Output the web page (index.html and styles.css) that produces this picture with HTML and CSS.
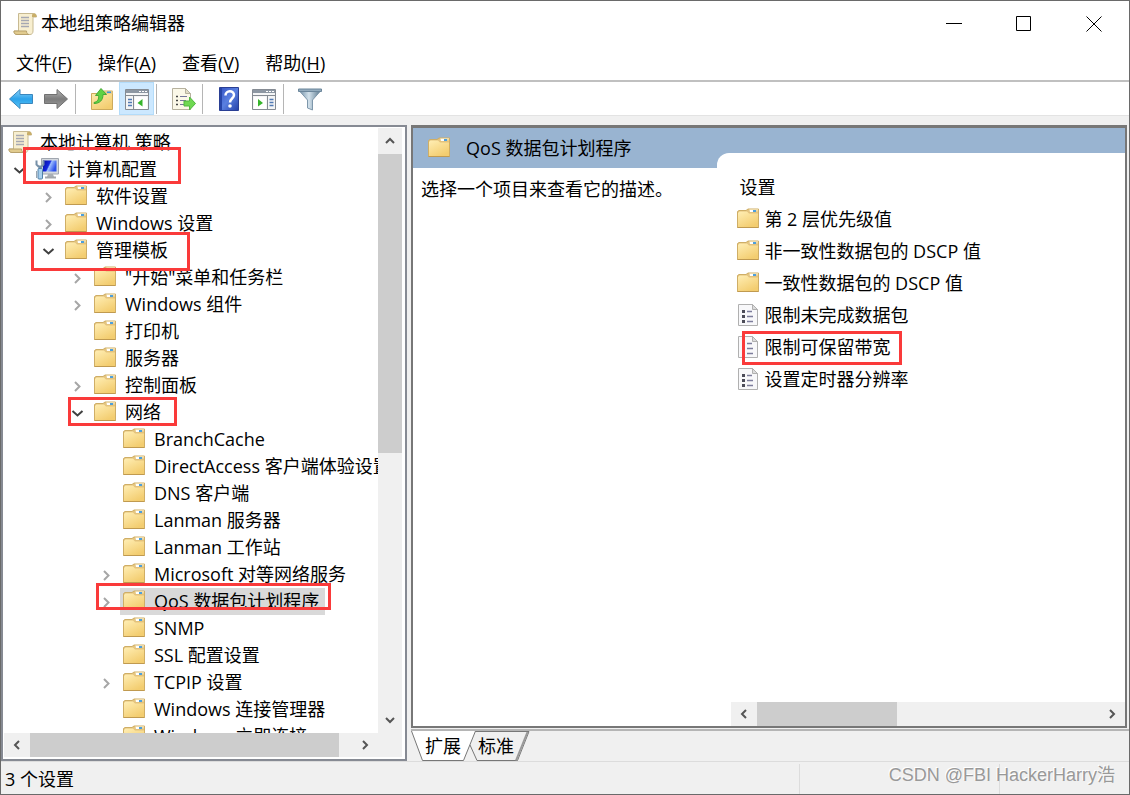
FILE: index.html
```html
<!DOCTYPE html>
<html lang="zh">
<head>
  <meta charset="UTF-8" />
  <meta name="viewport" content="width=device-width, initial-scale=1.0" />
  <title>本地组策略编辑器</title>
  <link rel="stylesheet" href="styles.css">
</head>
<body>
  <!-- 图标 -->
  <svg class="sprite" aria-hidden="true">
    <defs>
      <linearGradient id="gFolder" x1="0" y1="0" x2="0.6" y2="1">
        <stop offset="0" stop-color="#ffeeb4" /><stop offset="1" stop-color="#f3cd70" />
      </linearGradient>
      <linearGradient id="gBlue" x1="0" y1="0" x2="0" y2="1">
        <stop offset="0" stop-color="#8fd3f8" /><stop offset="0.5" stop-color="#2ba2ea" /><stop offset="1" stop-color="#5cc6f7" />
      </linearGradient>
      <linearGradient id="gGray" x1="0" y1="0" x2="0" y2="1">
        <stop offset="0" stop-color="#b8b8b8" /><stop offset="0.5" stop-color="#7c7c7c" /><stop offset="1" stop-color="#a0a0a0" />
      </linearGradient>
      <linearGradient id="gHelp" x1="0" y1="0" x2="1" y2="1">
        <stop offset="0" stop-color="#3453c4" /><stop offset="0.5" stop-color="#5a80e0" /><stop offset="1" stop-color="#2440a8" />
      </linearGradient>
      <linearGradient id="gScreen" x1="0" y1="0" x2="1" y2="0.4">
        <stop offset="0" stop-color="#0508a0" /><stop offset="0.5" stop-color="#1428e0" /><stop offset="0.6" stop-color="#9cbcff" /><stop offset="1" stop-color="#2c50ea" />
      </linearGradient>
      <linearGradient id="gFunnel" x1="0" y1="0" x2="1" y2="0">
        <stop offset="0" stop-color="#6d8ba3" /><stop offset="0.45" stop-color="#d3e2ec" /><stop offset="1" stop-color="#557389" />
      </linearGradient>
    </defs>
    <symbol id="folder" viewBox="0 0 24 24">
      <path d="M1.500 4.500L3 3.500h7l2-1.500h10.500v18.500H1.500z" fill="#e3c27c" stroke="#cfae66" />
      <path d="M2 6L3.500 4.500h7.500l2 2h9v13.500H2z" fill="url(#gFolder)" />
      <path d="M12.500 4.500l1-2.500h8.500v2.500z" fill="#edd9a8" />
      <path d="M14 3h3v2h-3z" fill="#fff" />
      <path d="M17 3h3v2h-3z" fill="#4c9fdc" />
      <path d="M1.500 20.500h21" stroke="#c09a50" />
    </symbol>
    <symbol id="scroll" viewBox="0 0 24 24">
      <path d="M5.500 1.500h15c2 0 3 1 3 3.500h-3.500v14c0 2-1 3.500-3 3.500H4c-2 0-3-1-3-3.500h4.500z" fill="#f8efd0" stroke="#c8ba92" />
      <path d="M20.500 1.500c-1.500 0-1.500 1.500-1.500 3.500h4.500c0-2.500-1-3.500-3-3.500z" fill="#c9ae68" />
      <path d="M1 19h12.500c0 2 1 3.500 2.500 3.500H4c-2 0-3-1-3-3.500z" fill="#e1cb8e" stroke="#b7a06b" />
      <path d="M8 5.500h8M8 8.500h8M8 11.500h8M8 14.500h8" stroke="#a6a8b2" stroke-width="1.500" />
    </symbol>
    <symbol id="computer" viewBox="0 0 24 24">
      <path d="M6.500 1.500h17v15.500h-17z" fill="#d3d8de" stroke="#a0a6af" />
      <path d="M8 3.500h13.500v11H8z" fill="url(#gScreen)" />
      <path d="M13 17h5l1 3h-7z" fill="#a9afb5" />
      <path d="M10 20.500h11" stroke="#a2a6ab" stroke-width="2" />
      <path d="M1.500 3.500v4l2 2h3l2-2v-4" fill="none" stroke="#7690a8" stroke-width="2" />
      <path d="M5 9v4" stroke="#7690a8" stroke-width="3" />
      <rect x="3" y="11.500" width="4.500" height="10.500" rx="1" fill="#a8d0ee" stroke="#5180a7" />
      <path d="M1.500 14v7" stroke="#9aa5b0" />
    </symbol>
    <symbol id="policy" viewBox="0 0 24 24">
      <path d="M2.500 1.500h14l5 5v16h-19z" fill="#f8f8fa" stroke="#b0b0b0" />
      <path d="M16.500 1.500v5h5z" fill="#dcdcdc" stroke="#b0b0b0" />
      <path d="M6 7h3v3H6zM6 12h3v3H6zM6 17h3v3H6z" fill="#4c4c58" />
      <path d="M11 8.500h5M11 13.500h6M11 18.500h6" stroke="#7d7d9c" stroke-width="1.500" />
    </symbol>
    <symbol id="closed" viewBox="0 0 18 18">
      <path d="M7 5l4.500 4.500L7 14" fill="none" stroke="#a6a6a6" stroke-width="2" />
    </symbol>
    <symbol id="open" viewBox="0 0 18 18">
      <path d="M4.500 7l5 4.500 5-4.500" fill="none" stroke="#404040" stroke-width="2" />
    </symbol>
    <symbol id="arrow" viewBox="0 0 18 18">
      <path d="M5 11l4-4 4 4" fill="none" stroke="#555" stroke-width="2" />
    </symbol>
  </svg>

  <div class="window">
    <header class="titlebar">
      <svg class="app-icon"><use href="#scroll" /></svg>
      <h1>本地组策略编辑器</h1>
      <div class="window-buttons">
        <button aria-label="最小化"><svg width="16" height="16"><path d="M0 7.500h16" /></svg></button>
        <button aria-label="最大化"><svg width="16" height="16"><path d="M0.500 0.500h14v14h-14z" /></svg></button>
        <button aria-label="关闭"><svg width="16" height="16"><path d="M0.500 0.500l15 15M15.500 0.500l-15 15" /></svg></button>
      </div>
    </header>

    <nav class="menubar">
      <button>文件(<u>F</u>)</button>
      <button>操作(<u>A</u>)</button>
      <button>查看(<u>V</u>)</button>
      <button>帮助(<u>H</u>)</button>
    </nav>

    <div class="toolbar">
      <button aria-label="后退">
        <svg viewBox="0 0 26 24"><path d="M1.500 12L12 2.500v5h12.500v9H12v5z" fill="url(#gBlue)" stroke="#3a86bd" /></svg>
      </button>
      <button aria-label="前进">
        <svg viewBox="0 0 26 24"><path d="M24.500 12L14 2.500v5H1.500v9H14v5z" fill="url(#gGray)" stroke="#707070" /></svg>
      </button>
      <span class="sep"></span>
      <button aria-label="向上">
        <svg viewBox="0 0 26 24">
          <path d="M2.500 6.500h10l2-2.500h9v18.500h-21z" fill="url(#gFolder)" stroke="#cdaa5c" />
          <path d="M15 4h8.500v3H14z" fill="#e6cb8c" /><path d="M18 4.500h4v1.500h-4z" fill="#3c94dc" />
          <path d="M5 15.500c4-1 5-3.500 4.500-7H6.500L12 1.500l5.500 6h-3.500c0 5.500-3 9-9 9z" fill="#5fd243" stroke="#46ab35" />
        </svg>
      </button>
      <button class="pressed" aria-label="显示/隐藏控制台树">
        <svg viewBox="0 0 26 24">
          <path d="M1.500 2.500h23v20h-23z" fill="#f4f5f6" stroke="#858b93" />
          <path d="M2 3h22v3H2z" fill="#8d97a3" /><path d="M15 4.500h2M18 4.500h2M21 4.500h2" stroke="#fff" />
          <path d="M1.500 8.500h23M9.500 9v13" stroke="#858b93" />
          <path d="M4 12.500h4M4 15.500h4M4 18.500h4" stroke="#517ab4" stroke-width="1.500" />
          <path d="M11 10h12v12H11z" fill="#fff" /><path d="M18.500 12v7.500l-5-3.500z" fill="#36b52b" />
        </svg>
      </button>
      <span class="sep"></span>
      <button aria-label="导出列表">
        <svg viewBox="0 0 26 24">
          <path d="M2.500 1.500h13l5 5v16h-18z" fill="#fbf8e8" stroke="#b6b19e" />
          <path d="M15.500 1.500v5h5z" fill="#e1dcc6" stroke="#b6b19e" />
          <path d="M6 9.500h2M6 13.500h2M6 17.500h2" stroke="#444" stroke-width="1.500" />
          <path d="M10 9.500h7M10 13.500h6M10 17.500h6" stroke="#77779c" />
          <path d="M14 14h5.500v-4l6 6.500-6 6.500v-4H14z" fill="#6fd851" stroke="#50b640" />
        </svg>
      </button>
      <span class="sep"></span>
      <button aria-label="帮助">
        <svg viewBox="0 0 26 24">
          <path d="M3.500 0.500h19v23h-19z" fill="url(#gHelp)" stroke="#2a3f94" /><path d="M5 1v22" stroke="#2745a8" stroke-width="2" />
          <path d="M9.500 8.500c0-5.500 8.500-5.500 8.500-0.500 0 3.500-4 3.500-4 7.500" fill="none" stroke="#fff" stroke-width="2.500" />
          <circle cx="14" cy="19" r="1.800" fill="#fff" />
        </svg>
      </button>
      <button aria-label="显示/隐藏操作窗格">
        <svg viewBox="0 0 26 24">
          <path d="M1.500 2.500h23v20h-23z" fill="#f4f5f6" stroke="#858b93" />
          <path d="M2 3h22v3H2z" fill="#8d97a3" /><path d="M15 4.500h2M18 4.500h2M21 4.500h2" stroke="#fff" />
          <path d="M1.500 8.500h23M16.500 9v13" stroke="#858b93" />
          <path d="M18.500 12.500h4M18.500 15.500h4M18.500 18.500h4" stroke="#517ab4" stroke-width="1.500" />
          <path d="M3 10h12v12H3z" fill="#fff" /><path d="M7 12v7.500l5-3.500z" fill="#36b52b" />
        </svg>
      </button>
      <span class="sep"></span>
      <button aria-label="筛选器">
        <svg viewBox="0 0 26 24">
          <path d="M2 3.500L10.500 13v8l5 2v-10L24 3.500z" fill="url(#gFunnel)" stroke="#7e97ab" />
          <path d="M1.500 2h23v2.500h-23z" fill="#93abbd" stroke="#6b869b" />
        </svg>
      </button>
    </div>

    <main class="panes">
      <section class="tree-pane" aria-label="控制台树">
        <div class="tree">
          <div class="node root"><svg class="icon"><use href="#scroll" /></svg><span>本地计算机 策略</span></div>
          <ul>
            <li>
              <div class="node"><button class="toggle" aria-label="折叠"><svg><use href="#open" /></svg></button><svg class="icon"><use href="#computer" /></svg><span>计算机配置</span></div>
              <ul>
                <li><div class="node"><button class="toggle" aria-label="展开"><svg><use href="#closed" /></svg></button><svg class="icon"><use href="#folder" /></svg><span>软件设置</span></div></li>
                <li><div class="node"><button class="toggle" aria-label="展开"><svg><use href="#closed" /></svg></button><svg class="icon"><use href="#folder" /></svg><span>Windows 设置</span></div></li>
                <li>
                  <div class="node"><button class="toggle" aria-label="折叠"><svg><use href="#open" /></svg></button><svg class="icon"><use href="#folder" /></svg><span>管理模板</span></div>
                  <ul>
                    <li><div class="node"><button class="toggle" aria-label="展开"><svg><use href="#closed" /></svg></button><svg class="icon"><use href="#folder" /></svg><span>"开始"菜单和任务栏</span></div></li>
                    <li><div class="node"><button class="toggle" aria-label="展开"><svg><use href="#closed" /></svg></button><svg class="icon"><use href="#folder" /></svg><span>Windows 组件</span></div></li>
                    <li><div class="node leaf"><svg class="icon"><use href="#folder" /></svg><span>打印机</span></div></li>
                    <li><div class="node leaf"><svg class="icon"><use href="#folder" /></svg><span>服务器</span></div></li>
                    <li><div class="node"><button class="toggle" aria-label="展开"><svg><use href="#closed" /></svg></button><svg class="icon"><use href="#folder" /></svg><span>控制面板</span></div></li>
                    <li>
                      <div class="node"><button class="toggle" aria-label="折叠"><svg><use href="#open" /></svg></button><svg class="icon"><use href="#folder" /></svg><span>网络</span></div>
                      <ul>
                        <li><div class="node leaf"><svg class="icon"><use href="#folder" /></svg><span>BranchCache</span></div></li>
                        <li><div class="node leaf"><svg class="icon"><use href="#folder" /></svg><span>DirectAccess 客户端体验设置</span></div></li>
                        <li><div class="node leaf"><svg class="icon"><use href="#folder" /></svg><span>DNS 客户端</span></div></li>
                        <li><div class="node leaf"><svg class="icon"><use href="#folder" /></svg><span>Lanman 服务器</span></div></li>
                        <li><div class="node leaf"><svg class="icon"><use href="#folder" /></svg><span>Lanman 工作站</span></div></li>
                        <li><div class="node"><button class="toggle" aria-label="展开"><svg><use href="#closed" /></svg></button><svg class="icon"><use href="#folder" /></svg><span>Microsoft 对等网络服务</span></div></li>
                        <li><div class="node selected"><button class="toggle" aria-label="展开"><svg><use href="#closed" /></svg></button><svg class="icon"><use href="#folder" /></svg><span>QoS 数据包计划程序</span></div></li>
                        <li><div class="node leaf"><svg class="icon"><use href="#folder" /></svg><span>SNMP</span></div></li>
                        <li><div class="node leaf"><svg class="icon"><use href="#folder" /></svg><span>SSL 配置设置</span></div></li>
                        <li><div class="node"><button class="toggle" aria-label="展开"><svg><use href="#closed" /></svg></button><svg class="icon"><use href="#folder" /></svg><span>TCPIP 设置</span></div></li>
                        <li><div class="node leaf"><svg class="icon"><use href="#folder" /></svg><span>Windows 连接管理器</span></div></li>
                        <li><div class="node leaf"><svg class="icon"><use href="#folder" /></svg><span>Windows 立即连接</span></div></li>
                      </ul>
                    </li>
                  </ul>
                </li>
              </ul>
            </li>
          </ul>
          <!-- 红框标注 -->
          <span class="mark mark-computer"></span>
          <span class="mark mark-template"></span>
          <span class="mark mark-network"></span>
          <span class="mark mark-qos"></span>
        </div>
        <div class="scrollbar vertical">
          <button aria-label="向上滚动"><svg><use href="#arrow" /></svg></button>
          <div class="track"><div class="thumb"></div></div>
          <button class="down" aria-label="向下滚动"><svg><use href="#arrow" /></svg></button>
        </div>
        <div class="scrollbar horizontal">
          <button class="left" aria-label="向左滚动"><svg><use href="#arrow" /></svg></button>
          <div class="track"><div class="thumb"></div></div>
          <button class="right" aria-label="向右滚动"><svg><use href="#arrow" /></svg></button>
        </div>
        <div class="corner"></div>
      </section>

      <div class="detail-column">
        <section class="detail-pane">
          <div class="detail-head">
            <h2><svg class="icon"><use href="#folder" /></svg>QoS 数据包计划程序</h2>
            <div class="curve"></div>
          </div>
          <div class="detail-body">
            <p class="description">选择一个项目来查看它的描述。</p>
            <div class="settings">
              <table>
                <thead>
                  <tr><th>设置</th></tr>
                </thead>
                <tbody>
                  <tr><td><svg class="icon"><use href="#folder" /></svg>第 2 层优先级值</td></tr>
                  <tr><td><svg class="icon"><use href="#folder" /></svg>非一致性数据包的 DSCP 值</td></tr>
                  <tr><td><svg class="icon"><use href="#folder" /></svg>一致性数据包的 DSCP 值</td></tr>
                  <tr><td><svg class="icon"><use href="#policy" /></svg>限制未完成数据包</td></tr>
                  <tr><td><svg class="icon"><use href="#policy" /></svg>限制可保留带宽<span class="mark mark-bandwidth"></span></td></tr>
                  <tr><td><svg class="icon"><use href="#policy" /></svg>设置定时器分辨率</td></tr>
                </tbody>
              </table>
              <div class="scrollbar horizontal">
                <button class="left" aria-label="向左滚动"><svg><use href="#arrow" /></svg></button>
                <div class="track"><div class="thumb"></div></div>
                <button class="right" aria-label="向右滚动"><svg><use href="#arrow" /></svg></button>
              </div>
            </div>
          </div>
        </section>
        <div class="tabs">
          <svg class="tab-shapes" width="120" height="31">
            <path d="M64 0.500h54L106.500 29.500H66L59 14" fill="#f0f0f0" stroke="#777" />
            <path d="M116.500 1L105 29.500" stroke="#999" stroke-width="2" />
            <path d="M0.500 0L11.500 29.500H52.500L64.500 0" fill="#fff" stroke="#777" />
          </svg>
          <button>扩展</button>
          <button>标准</button>
        </div>
      </div>
    </main>

    <footer class="statusbar">
      <span class="count">3 个设置</span>
      <span class="cell"></span>
      <span class="cell small"></span>
      <span class="watermark">CSDN @FBI HackerHarry浩</span>
    </footer>
  </div>
</body>
</html>
```

FILE: styles.css
```css
:root {
  --bg: #f0f0f0;
  --thumb: #cdcdcd;
  --border: #868a93;
  --header: #99b4d1;
  --red: #fa3a3a;
}

* {
  box-sizing: border-box;
}

body {
  margin: 0;
  font-family: "Open Sans", "Noto Sans CJK SC", sans-serif;
  font-size: 18px;
  line-height: 27px;
  color: #000;
}

button {
  font: inherit;
  color: inherit;
  background: none;
  border: none;
  padding: 0;
}

svg {
  display: block;
  flex: none;
}

.sprite {
  position: absolute;
  width: 0;
  height: 0;
}

.icon {
  width: 24px;
  height: 24px;
}

.window {
  height: 100vh;
  display: flex;
  flex-direction: column;
  background: var(--bg);
  border: 1px solid #6a6a6a;
}

/* 标题栏 */
.titlebar {
  display: flex;
  align-items: center;
  height: 45px;
  padding-left: 12px;
  background: #fff;
}

.titlebar h1 {
  flex: 1;
  margin: 0 0 0 4px;
  font-size: 18px;
  font-weight: 400;
}

.app-icon {
  width: 24px;
  height: 24px;
}

.window-buttons {
  display: flex;
}

.window-buttons button {
  width: 70px;
  height: 45px;
  display: flex;
  align-items: center;
  justify-content: center;
}

.window-buttons path {
  fill: none;
  stroke: #000;
}

/* 菜单 */
.menubar {
  display: flex;
  gap: 2px;
  height: 36px;
  padding: 1px 0 0 3px;
  background: #fff;
  border-bottom: 2px solid #c0c0c0;
}

.menubar button {
  padding: 0 12px;
}

.menubar u {
  text-underline-offset: 2px;
}

/* 工具栏 */
.toolbar {
  display: flex;
  align-items: center;
  height: 34px;
  padding-left: 2px;
  background: #fff;
  border-bottom: 1px solid #e3e3e3;
}

.toolbar button {
  width: 35px;
  height: 33px;
  display: flex;
  align-items: center;
  justify-content: center;
}

.toolbar svg {
  width: 26px;
  height: 24px;
}

.toolbar .pressed {
  background: #cce8ff;
  border: 1px solid #b3dcfa;
}

.sep {
  width: 1px;
  height: 30px;
  margin: 0 8px 0 2px;
  background: #b5b5b5;
}

/* 主区域 */
.panes {
  flex: 1;
  min-height: 0;
  display: grid;
  grid-template-columns: 36% minmax(0, 1fr);
  gap: 4px;
  padding-top: 9px;
}

.tree-pane {
  min-height: 0;
  display: grid;
  grid-template-columns: minmax(0, 1fr) 24px;
  grid-template-rows: minmax(0, 1fr) 24px;
  padding: 1px 3px 2px 1px;
  background: #fff;
  border: 2px solid var(--border);
}

.tree {
  position: relative;
  overflow: hidden;
  padding-top: 1px;
}

.tree ul {
  list-style: none;
  margin: 0;
  padding-left: 29px;
}

.tree > ul {
  padding-left: 6px;
}

.node {
  display: flex;
  align-items: center;
  height: 27px;
  white-space: nowrap;
}

.node .icon {
  margin: 0 8px 2px 7px;
}

.node.root .icon {
  margin-left: 4px;
}

.node.leaf {
  padding-left: 18px;
}

.node.selected {
  width: max-content;
  padding-right: 6px;
  background: linear-gradient(#d9d9d9, #d9d9d9) 23px 0 no-repeat;
}

.toggle,
.toggle svg {
  width: 18px;
  height: 18px;
}

/* 滚动条 */
.scrollbar {
  display: flex;
  background: var(--bg);
}

.scrollbar button {
  width: 26px;
  height: 24px;
  display: flex;
  align-items: center;
  justify-content: center;
}

.scrollbar svg {
  width: 18px;
  height: 18px;
}

.scrollbar .track {
  flex: 1;
}

.scrollbar .thumb {
  background: var(--thumb);
}

.vertical {
  flex-direction: column;
}

.vertical button {
  width: 24px;
  height: 26px;
}

.vertical .thumb {
  height: 54%;
}

.horizontal .thumb {
  width: 96%;
  height: 100%;
}

.down svg {
  transform: rotate(180deg);
}

.left svg {
  transform: rotate(-90deg);
}

.right svg {
  transform: rotate(90deg);
}

.corner {
  background: var(--bg);
}

/* 右侧窗格 */
.detail-column {
  min-height: 0;
  display: flex;
  flex-direction: column;
}

.detail-pane {
  flex: 1;
  min-height: 0;
  display: flex;
  flex-direction: column;
  margin-right: 2px;
  background: #fff;
  border: 2px solid #777;
  border-top: 3px solid #777;
}

.detail-head,
.detail-body {
  display: grid;
  grid-template-columns: 45% minmax(0, 1fr);
}

.detail-head {
  height: 40px;
  background: var(--header);
}

.detail-head h2 {
  display: flex;
  align-items: center;
  gap: 15px;
  margin: 0;
  padding-left: 14px;
  font-size: 18px;
  font-weight: 400;
}

.curve {
  align-self: end;
  height: 15px;
  margin-left: -16px;
  background: #fff;
  border-top-left-radius: 12px;
}

.detail-body {
  flex: 1;
  min-height: 0;
}

.description {
  margin: 0;
  padding: 8px 0 0 8px;
}

.settings {
  display: flex;
  flex-direction: column;
  justify-content: space-between;
  margin-left: -2px;
}

.settings table {
  width: 100%;
  border-collapse: collapse;
  margin-top: 3px;
}

.settings th {
  height: 32px;
  padding: 0 8px;
  font-weight: 400;
  text-align: left;
}

.settings td {
  position: relative;
  display: flex;
  align-items: center;
  gap: 4px;
  height: 32px;
  padding: 0 0 0 5px;
}

.settings .thumb {
  width: 41%;
}

/* 底部标签 */
.tabs {
  position: relative;
  display: flex;
  height: 32px;
  margin-top: 1px;
  padding-left: 14px;
  gap: 17px;
  border-top: 2px solid #b5b5b5;
}

.tabs button {
  position: relative;
}

.tab-shapes {
  position: absolute;
  left: 0;
  top: 0;
}

/* 状态栏 */
.statusbar {
  position: relative;
  display: flex;
  height: 33px;
  border-top: 1px solid #dcdcdc;
}

.count {
  flex: 1;
  padding: 4px 0 0 4px;
}

.cell {
  width: 200px;
  margin-top: 2px;
  border-left: 1px solid #dcdcdc;
}

.cell.small {
  width: 130px;
}

.watermark {
  position: absolute;
  right: 14px;
  top: 0;
  font-family: "Liberation Sans", "Noto Sans CJK SC", sans-serif;
  color: #999;
  text-shadow: -1px -1px 0 #fff;
}

/* 标注框 */
.mark {
  position: absolute;
  border: 3px solid var(--red);
  pointer-events: none;
}

.mark-computer {
  left: 19px;
  top: 19px;
  width: 158px;
  height: 37px;
}

.mark-template {
  left: 27px;
  top: 104px;
  width: 159px;
  height: 39px;
}

.mark-network {
  left: 64px;
  top: 269px;
  width: 109px;
  height: 29px;
}

.mark-qos {
  left: 92px;
  top: 455px;
  width: 235px;
  height: 27px;
}

.mark-bandwidth {
  left: 11px;
  top: 0;
  width: 160px;
  height: 34px;
}
```
